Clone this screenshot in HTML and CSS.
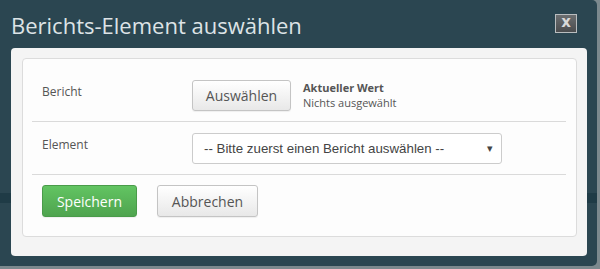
FILE: index.html
```html
<!DOCTYPE html>
<html lang="de">
<head>
    <meta charset="UTF-8">
    <title>Berichts-Element auswählen</title>
    <link rel="stylesheet" href="styles.css">
</head>
<body>
<div class="dialog">
    <div class="dialog-head">
        <h1 class="dialog-title">Berichts-Element auswählen</h1>
        <span class="close">x</span>
    </div>
    <div class="dialog-body">
        <div class="form">
            <div class="row">
                <label class="label">Bericht</label>
                <div class="control">
                    <button class="btn">Auswählen</button>
                    <div class="current">
                        <b>Aktueller Wert</b>
                        <span>Nichts ausgewählt</span>
                    </div>
                </div>
            </div>
            <div class="row">
                <label class="label">Element</label>
                <div class="control">
                    <div class="select">
                        <span>-- Bitte zuerst einen Bericht auswählen --</span>
                        <span class="caret">&#9662;</span>
                    </div>
                </div>
            </div>
            <div class="actions">
                <button class="btn btn-success">Speichern</button>
                <button class="btn btn-wide">Abbrechen</button>
            </div>
        </div>
    </div>
</div>
</body>
</html>
```

FILE: styles.css
```css
html, body{
    margin: 0;
    height: 100%;
    background: #7c898e;
}
body{
    font-family: "Open Sans", "DejaVu Sans", sans-serif;
    color: #555;
}
.dialog{
    width: 597px;
    height: 266px;
    box-sizing: border-box;
    background: linear-gradient(to bottom, #2b4651 0, #2b4651 193px, #1f3b46 193px, #1f3b46 203px, #2b4651 203px);
    border-radius: 0 5px 5px 0;
    padding: 0 10px 0 11px;
}
.dialog-head{
    height: 48px;
    display: flex;
    align-items: center;
    justify-content: space-between;
}
.dialog-title{
    margin: 0;
    font-weight: normal;
    font-size: 22px;
    color: #dde3e6;
    margin-top: 1px;
}
.close{
    width: 20px;
    height: 17px;
    border: 1px solid #b9bdbf;
    background: linear-gradient(#6b6e70, #4a4c4e);
    color: #d8d8d8;
    font-family: "DejaVu Sans", sans-serif;
    font-weight: bold;
    font-size: 15px;
    line-height: 15px;
    text-align: center;
    margin-right: 10px;
    margin-top: -1px;
}
.dialog-body{
    background: #f4f4f4;
    border-radius: 4px;
    height: 208px;
    padding: 10px 10px 0 11px;
    box-sizing: border-box;
}
.form{
    background: #fdfdfd;
    border: 1px solid #dcdcdc;
    border-radius: 4px;
    height: 179px;
    box-sizing: border-box;
    padding: 10px 10px 0 9px;
}
.row{
    display: flex;
    height: 52px;
    border-bottom: 1px solid #dadada;
}
.label{
    width: 150px;
    padding: 14px 0 0 10px;
    font-size: 12px;
    line-height: 18px;
}
.control{
    display: flex;
    align-items: center;
    padding-top: 1px;
}
.btn{
    height: 31px;
    padding: 0;
    border: 1px solid #c4c4c4;
    border-radius: 3px;
    background: linear-gradient(#ffffff, #e8e8e8);
    font-family: "Open Sans", "DejaVu Sans", sans-serif;
    font-size: 14px;
    color: #555;
    box-shadow: 0 1px 1px rgba(0,0,0,.06);
}
.control .btn{
    width: 99px;
}
.current{
    display: flex;
    flex-direction: column;
    margin-left: 12px;
    font-size: 11px;
    line-height: 15px;
    margin-top: -1px;
}
.current b{
    color: #555;
}
.select{
    width: 310px;
    height: 31px;
    box-sizing: border-box;
    border: 1px solid #ccc;
    border-radius: 3px;
    background: #fff;
    display: flex;
    align-items: center;
    justify-content: space-between;
    padding: 0 8px 0 11px;
    font-family: "Liberation Sans", Arial, sans-serif;
    font-size: 13.3px;
    color: #444;
}
.caret{
    font-size: 11px;
    color: #444;
}
.actions{
    display: flex;
    gap: 20px;
    padding: 10px 0 0 10px;
}
.actions .btn{
    height: 32px;
}
.btn-success{
    width: 95px;
    color: #fff;
    border-color: #4a9b4a;
    background: linear-gradient(#62c462, #4fa44f);
}
.btn-wide{
    width: 101px;
}
```
